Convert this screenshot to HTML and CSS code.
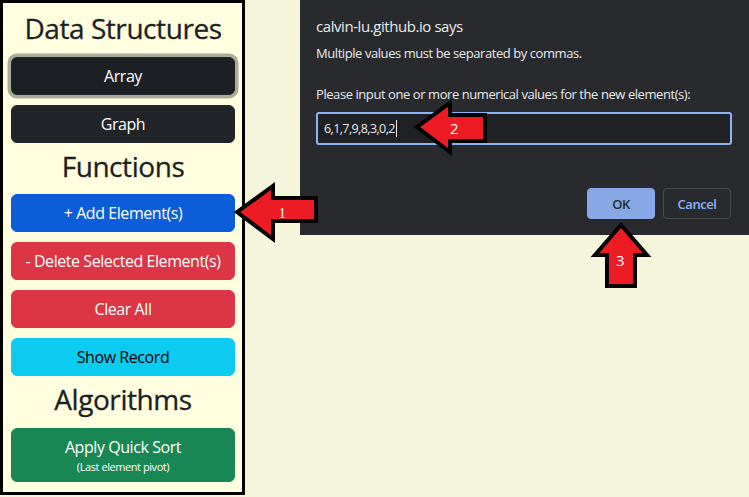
FILE: index.html
```html
<!DOCTYPE html>
<html>
<head>
<meta charset="utf-8">
<link rel="stylesheet" href="styles.css">
</head>
<body>
<aside class="sidebar">
  <h2 class="title">Data Structures</h2>
  <button class="btn btn-dark btn-focus">Array</button>
  <button class="btn btn-dark">Graph</button>
  <h2 class="title">Functions</h2>
  <button class="btn btn-primary">+ Add Element(s)</button>
  <button class="btn btn-danger">- Delete Selected Element(s)</button>
  <button class="btn btn-danger">Clear All</button>
  <button class="btn btn-info">Show Record</button>
  <h2 class="title">Algorithms</h2>
  <button class="btn btn-success btn-sort">Apply Quick Sort<span class="sub">(Last element pivot)</span></button>
</aside>

<div class="dialog">
  <div class="dlg-title">calvin-lu.github.io says</div>
  <div class="dlg-msg">Multiple values must be separated by commas.</div>
  <div class="dlg-prompt">Please input one or more numerical values for the new element(s):</div>
  <div class="dlg-input"><span class="dlg-value">6,1,7,9,8,3,0,2</span><span class="caret"></span></div>
  <div class="dlg-actions">
    <button class="dlg-btn dlg-ok">OK</button>
    <button class="dlg-btn dlg-cancel">Cancel</button>
  </div>
</div>

<svg class="arrows" width="749" height="497" viewBox="0 0 749 497">
  <g fill="#ed1c24" stroke="#000" stroke-width="4" stroke-linejoin="miter">
    <polygon points="237,212 273,186 273,198 316,198 316,221 273,221 273,239"/>
    <polygon points="417,127 450,103 450,115 485,115 485,141 450,141 450,152"/>
    <polygon points="621,225 647,255 635,255 635,286 607,286 607,255 595,255"/>
  </g>
  <g fill="#fff" class="arrow-label">
    <text x="282" y="218" text-anchor="middle" class="lbl1">1</text>
    <text x="454" y="134" text-anchor="middle">2</text>
    <text x="620" y="266" text-anchor="middle">3</text>
  </g>
</svg>
</body>
</html>
```
FILE: styles.css
```css
html, body {
  margin: 0;
  padding: 0;
}
body {
  background: #f5f5dc;
  width: 749px;
  height: 497px;
  overflow: hidden;
  position: relative;
  font-family: "Segoe UI", "Open Sans", "Noto Sans", sans-serif;
  letter-spacing: -0.027em;
  color: #212529;
}
.sidebar {
  box-sizing: border-box;
  width: 245px;
  height: 495px;
  border: 3px solid #000;
  background: #ffffe0;
  padding: 12px 7px 0 8px;
  text-align: center;
}
.title {
  font-size: 28px;
  line-height: 33.6px;
  font-weight: 500;
  margin: -3px 0 11px;
  color: #1c1f23;
  white-space: nowrap;
  -webkit-text-stroke: 0.3px #1c1f23;
}
.btn {
  display: block;
  box-sizing: border-box;
  width: 100%;
  margin: 0 0 10px;
  padding: 6px 12px;
  font-family: inherit;
  letter-spacing: inherit;
  font-size: 16px;
  line-height: 24px;
  border: 1px solid transparent;
  border-radius: 6px;
  color: #fff;
  text-align: center;
  white-space: nowrap;
}
.btn-dark { background: #212529; border-color: #212529; }
.btn-focus { box-shadow: 0 0 0 3.5px rgba(66, 70, 73, 0.45); background: #1c1f23; }
.btn-primary { background: #0b5ed7; border-color: #0b5ed7; }
.btn-danger { background: #dc3545; border-color: #dc3545; }
.btn-info { background: #0dcaf0; border-color: #0dcaf0; color: #000; }
.btn-success { background: #198754; border-color: #198754; }
.btn-sort { padding-bottom: 7px; }
.sub {
  display: block;
  font-size: 11px;
  line-height: 15px;
}

.dialog {
  position: absolute;
  left: 300px;
  top: 0;
  right: 0;
  height: 235px;
  box-sizing: border-box;
  background: #292a2d;
  padding: 16px 17px 0 16px;
  color: #e8eaed;
}
.dlg-title {
  font-size: 15px;
  line-height: 20px;
}
.dlg-msg {
  font-size: 13px;
  line-height: 18px;
  margin-top: 8px;
}
.dlg-prompt {
  font-size: 13px;
  line-height: 18px;
  margin-top: 23px;
}
.dlg-input {
  margin-top: 9px;
  box-sizing: border-box;
  height: 33px;
  border: 2px solid #8ab4f8;
  border-radius: 3px;
  background: #202124;
  padding: 0 6px;
  display: flex;
  align-items: center;
  font-size: 12.5px;
  letter-spacing: -0.6px;
}
.caret {
  display: inline-block;
  width: 1px;
  height: 17px;
  background: #e8eaed;
  margin-left: 1px;
}
.dlg-actions {
  margin-top: 43px;
  display: flex;
  justify-content: flex-end;
  gap: 8px;
  padding-right: 1px;
}
.dlg-btn {
  box-sizing: border-box;
  width: 68px;
  height: 31px;
  border-radius: 4px;
  font-family: inherit;
  letter-spacing: inherit;
  font-size: 13px;
  font-weight: 600;
  padding: 0;
}
.dlg-ok {
  background: #87a8e4;
  border: 1px solid #87a8e4;
  color: #292a2d;
}
.dlg-cancel {
  background: transparent;
  border: 1px solid #4a4c50;
  color: #8ab4f8;
}

.arrows {
  position: absolute;
  left: 0;
  top: 0;
  pointer-events: none;
}
.arrow-label text {
  font-family: "Open Sans", sans-serif;
  font-size: 15px;
}
.arrow-label .lbl1 {
  font-family: "Liberation Serif", serif;
  font-size: 14px;
}
```
